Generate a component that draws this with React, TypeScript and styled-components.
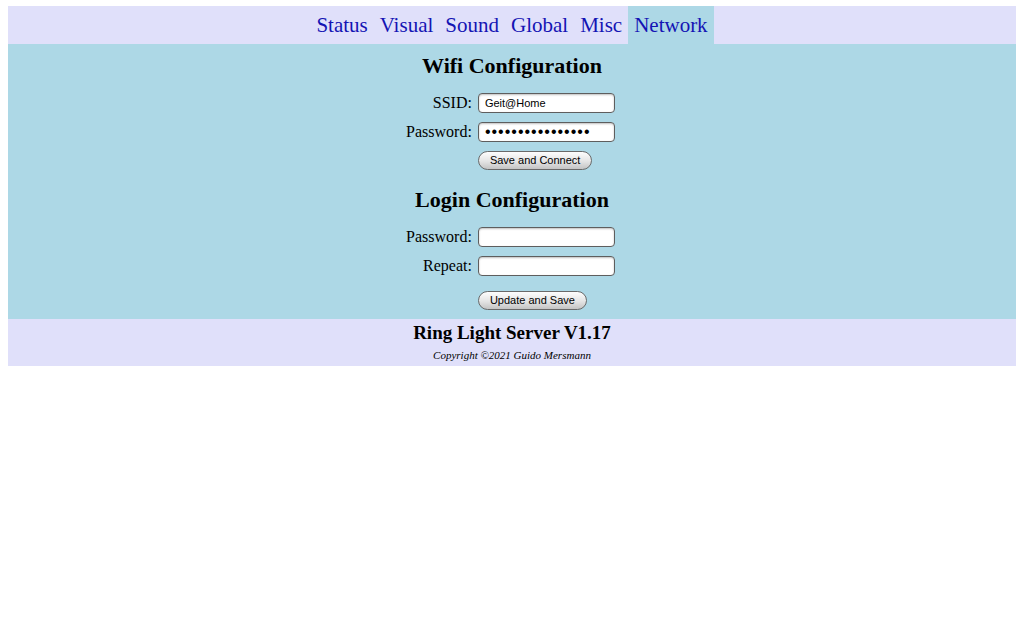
import React, { useState } from "react";
import styled, { createGlobalStyle } from "styled-components";

const GlobalStyle = createGlobalStyle`
  body {
    margin: 0;
    background: #fff;
    font-family: "Liberation Serif", "Times New Roman", serif;
  }
`;

const Page = styled.div`
  padding: 6px 8px;
`;

const NavBar = styled.nav`
  display: flex;
  justify-content: center;
  background: #e0e0fa;
  height: 38px;
`;

const Tab = styled.a<{ active?: boolean }>`
  display: flex;
  align-items: center;
  padding: 0 6px;
  font-size: 21px;
  color: #1414b4;
  text-decoration: none;
  cursor: pointer;
  background: ${(p) => (p.active ? "#add8e6" : "transparent")};
`;

const Main = styled.main`
  background: #add8e6;
  padding: 8px 0 9px;
  display: flex;
  flex-direction: column;
  align-items: center;
`;

const Heading = styled.h2<{ top?: number }>`
  margin: ${(p) => p.top ?? 0}px 0 13px;
  font-size: 22px;
  line-height: 28px;
  font-weight: bold;
  color: #000;
`;

const Form = styled.div<{ buttonGap?: number }>`
  display: grid;
  grid-template-columns: auto 137px;
  column-gap: 6px;
  row-gap: 9px;
  align-items: center;
  margin-left: -3px;
  & > button {
    margin-top: ${(p) => p.buttonGap ?? 0}px;
  }
`;

const Label = styled.label`
  font-size: 16px;
  text-align: right;
  color: #000;
`;

const Field = styled.input`
  box-sizing: border-box;
  width: 137px;
  height: 20px;
  padding: 0 6px;
  border: 1px solid #5e5e5e;
  border-radius: 4px;
  background: #fff;
  box-shadow: inset 0 1px 2px rgba(0, 0, 0, 0.25);
  font-family: "Liberation Sans", Arial, sans-serif;
  font-size: 11px;
  color: #000;
  outline: none;
  &[type="password"] {
    font-size: 16px;
    letter-spacing: 1px;
  }
`;

const Button = styled.button`
  grid-column: 2;
  justify-self: start;
  height: 19px;
  padding: 0 11px;
  border: 1px solid #6a6a6a;
  border-radius: 10px;
  background: linear-gradient(#fdfdfd, #e4e4e4 55%, #c4c4c4);
  font-family: "Liberation Sans", Arial, sans-serif;
  font-size: 11px;
  line-height: 17px;
  color: #000;
  cursor: pointer;
`;

const Footer = styled.footer`
  background: #e0e0fa;
  padding: 3px 0 4px;
  text-align: center;
`;

const FooterTitle = styled.div`
  font-size: 19px;
  font-weight: bold;
  line-height: 22px;
`;

const Copyright = styled.div`
  margin-top: 4px;
  font-size: 11px;
  line-height: 14px;
  font-style: italic;
`;

const tabs = ["Status", "Visual", "Sound", "Global", "Misc", "Network"];

export default function App() {
  const [ssid, setSsid] = useState("Geit@Home");
  const [wifiPass, setWifiPass] = useState("secretpassword12");
  const [loginPass, setLoginPass] = useState("");
  const [repeat, setRepeat] = useState("");

  return (
    <Page>
      <GlobalStyle />
      <NavBar>
        {tabs.map((t) => (
          <Tab key={t} active={t === "Network"}>
            {t}
          </Tab>
        ))}
      </NavBar>
      <Main>
        <Heading>Wifi Configuration</Heading>
        <Form>
          <Label>SSID:</Label>
          <Field value={ssid} onChange={(e) => setSsid(e.target.value)} />
          <Label>Password:</Label>
          <Field
            type="password"
            value={wifiPass}
            onChange={(e) => setWifiPass(e.target.value)}
          />
          <Button>Save and Connect</Button>
        </Form>
        <Heading top={16}>Login Configuration</Heading>
        <Form buttonGap={6}>
          <Label>Password:</Label>
          <Field
            type="password"
            value={loginPass}
            onChange={(e) => setLoginPass(e.target.value)}
          />
          <Label>Repeat:</Label>
          <Field
            type="password"
            value={repeat}
            onChange={(e) => setRepeat(e.target.value)}
          />
          <Button>Update and Save</Button>
        </Form>
      </Main>
      <Footer>
        <FooterTitle>Ring Light Server V1.17</FooterTitle>
        <Copyright>Copyright ©2021 Guido Mersmann</Copyright>
      </Footer>
    </Page>
  );
}
